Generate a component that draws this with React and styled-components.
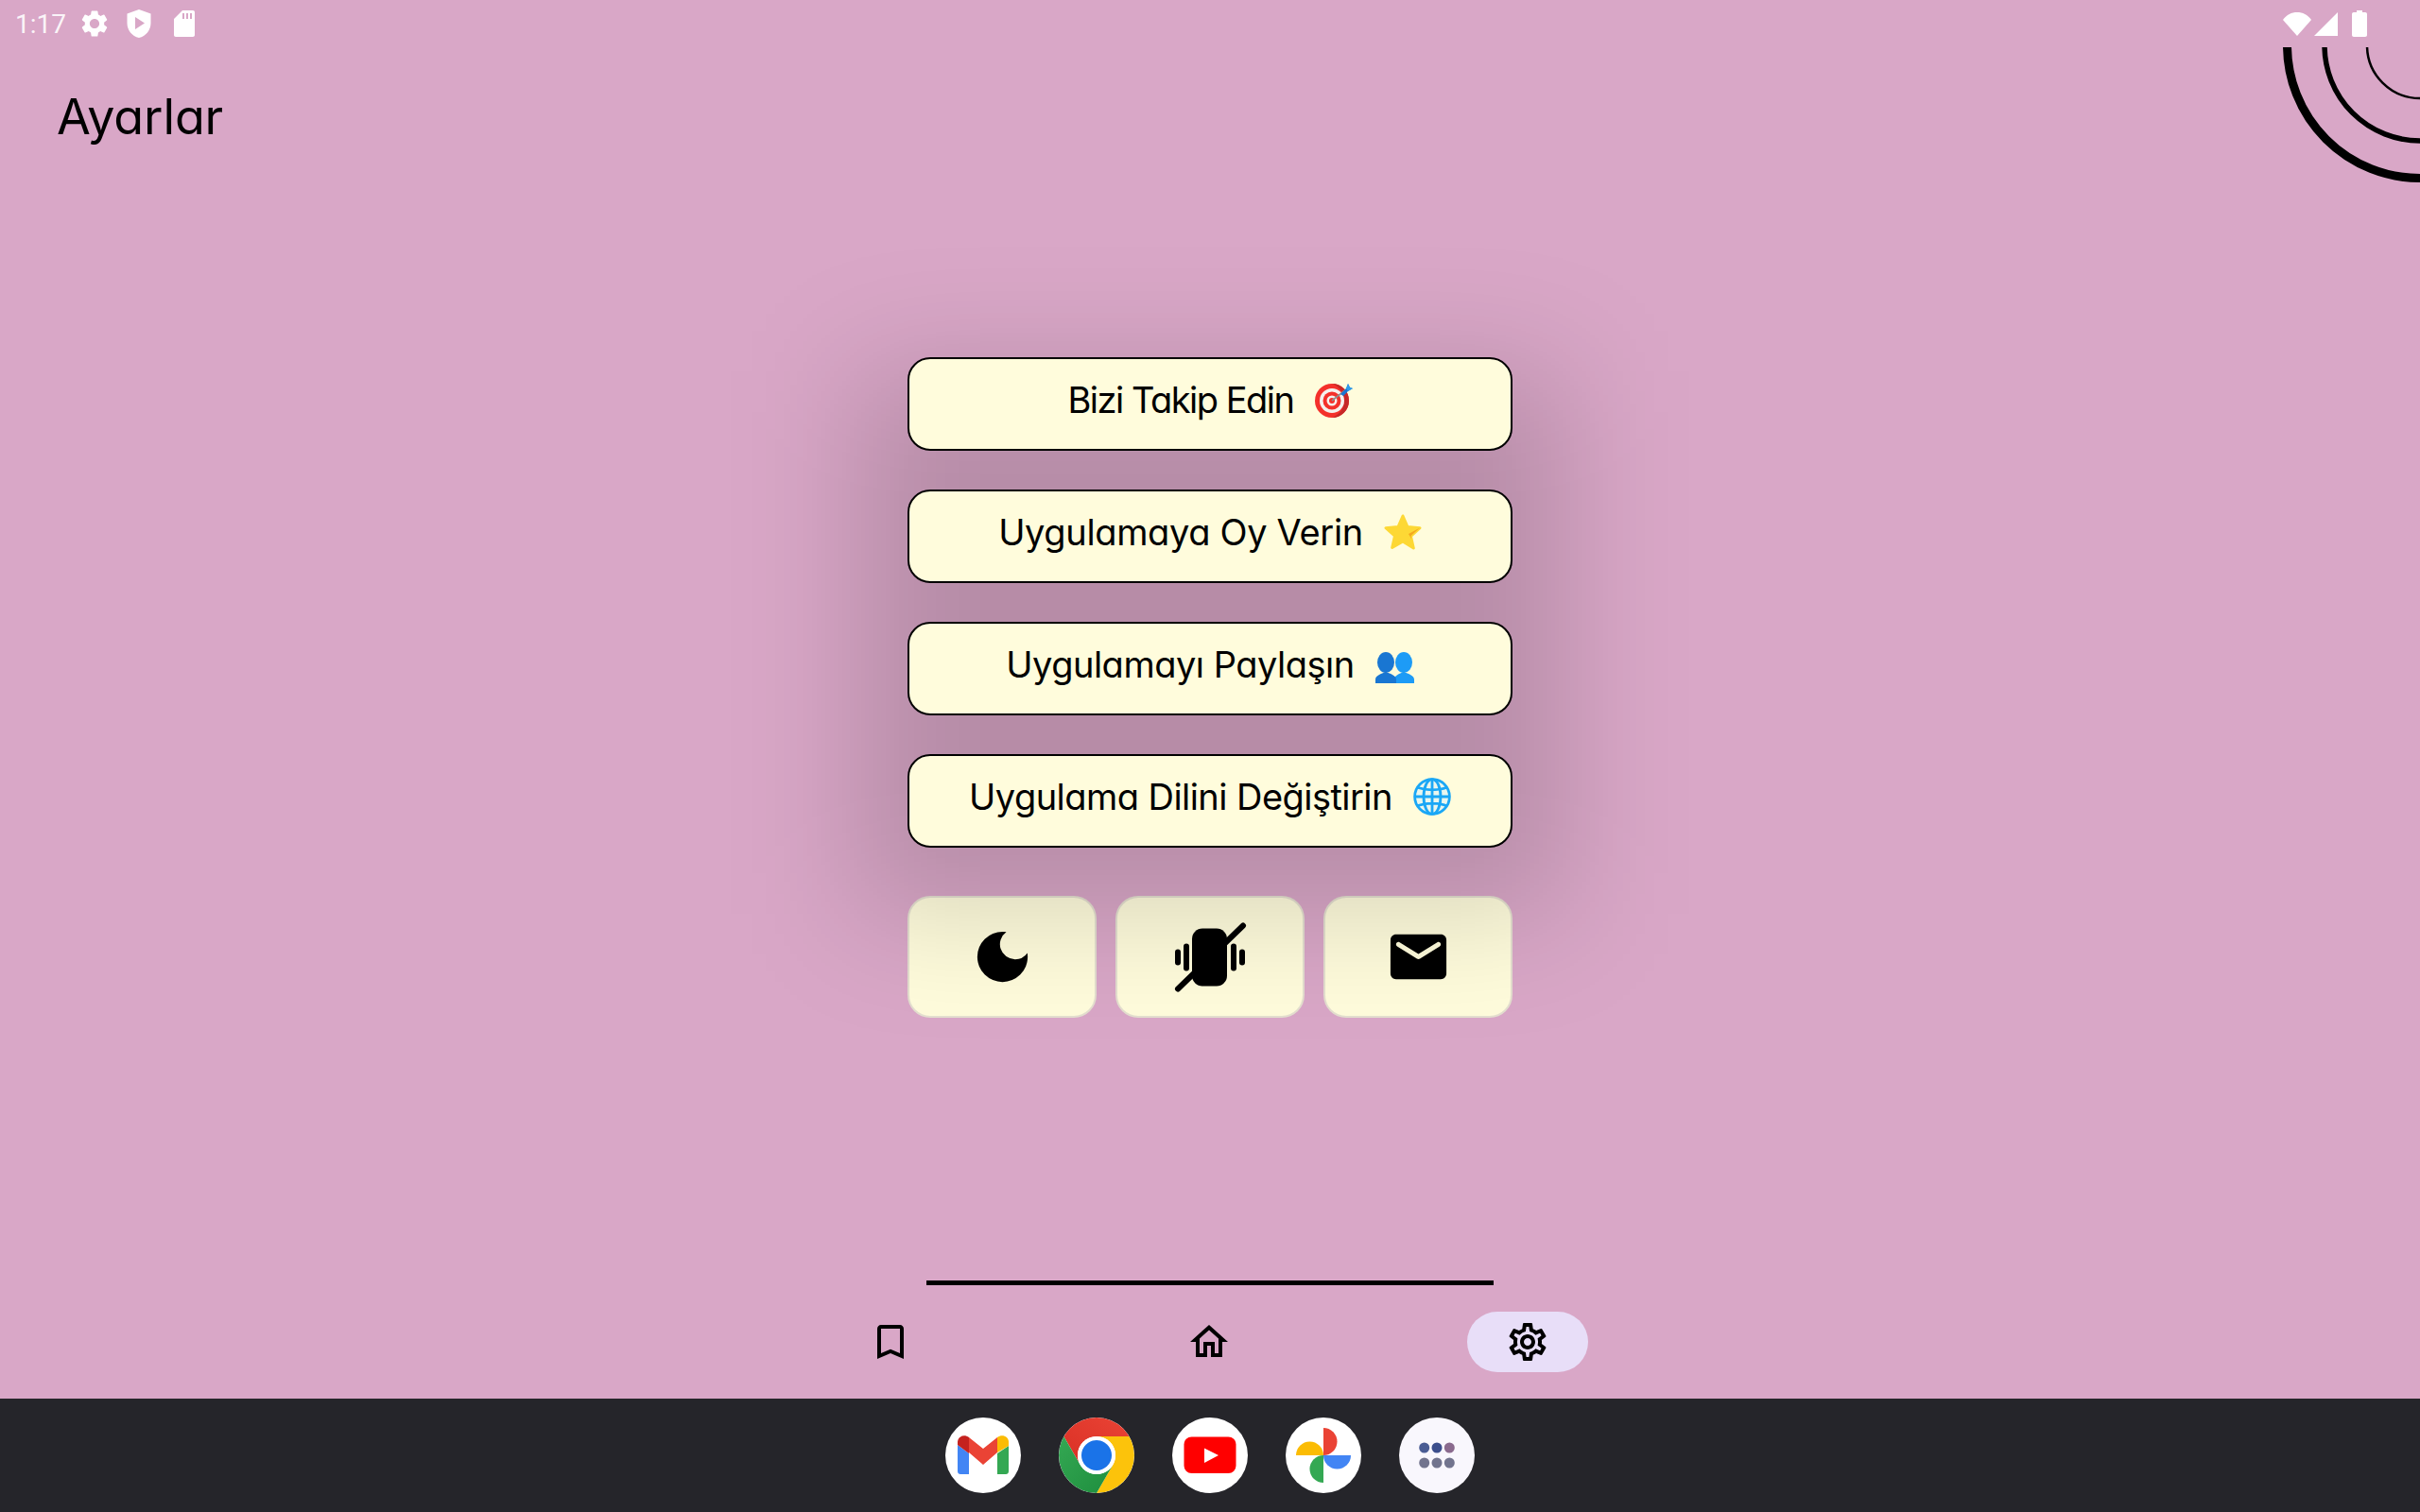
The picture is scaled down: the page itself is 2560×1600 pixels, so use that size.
import styled, { createGlobalStyle } from "styled-components";
import {
  MdBookmarkBorder,
  MdDarkMode,
  MdOutlineHome,
  MdOutlineSettings,
  MdSettings,
} from "react-icons/md";

const GlobalStyle = createGlobalStyle`
  * {
    box-sizing: border-box;
  }

  body {
    margin: 0;
    background: #d9a7c7;
    font-family: "Inter", "Noto Sans", sans-serif;
    font-feature-settings: "cv11" 1;
  }
`;

const Page = styled.div`
  position: relative;
  display: flex;
  flex-direction: column;
  height: 100vh;
  overflow: hidden;
  background: #d9a7c7;
  color: #000;
`;

const StatusBar = styled.div`
  display: flex;
  align-items: center;
  justify-content: space-between;
  height: 50px;
  padding: 0 56px 0 16px;
  color: #fff;
`;

const StatusGroup = styled.div`
  display: flex;
  align-items: center;
  gap: ${(p) => p.$gap || 12}px;
`;

const Time = styled.span`
  width: 55px;
  font-family: "Roboto", sans-serif;
  font-size: 28px;
  font-weight: 400;
  color: rgba(255, 255, 255, 0.9);
`;

const Rings = styled.svg`
  position: absolute;
  top: 50px;
  right: 0;
`;

const Header = styled.header`
  height: 328px;
  padding: 38px 0 0 60px;
`;

const Title = styled.h1`
  margin: 0;
  font-size: 52px;
  font-weight: 400;
  line-height: 72px;
  letter-spacing: -0.1px;
`;

const Main = styled.main`
  flex: 1;
  display: flex;
  flex-direction: column;
  align-items: center;
  gap: 51px;
`;

const MenuList = styled.div`
  position: relative;
  z-index: 1;
  display: flex;
  flex-direction: column;
  gap: 41px;
  width: 640px;

  &::before {
    content: "";
    position: absolute;
    inset: 15px -55px -70px;
    z-index: -1;
    background: rgba(0, 0, 0, 0.155);
    filter: blur(65px);
  }
`;

const MenuButton = styled.button`
  display: flex;
  align-items: center;
  justify-content: center;
  gap: 22px;
  width: 100%;
  height: 99px;
  padding: 0 0 10px;
  border: 2px solid #000;
  border-radius: 24px;
  background: #fffcdc;
  color: #000;
  font-family: inherit;
  font-feature-settings: inherit;
  font-size: 38px;
  font-weight: 400;
  letter-spacing: ${(p) => p.$tracking}px;
`;

const ActionRow = styled.div`
  display: flex;
  gap: 20px;
  width: 640px;
`;

const ActionButton = styled.button`
  display: flex;
  align-items: center;
  justify-content: center;
  flex: 1;
  height: 129px;
  padding: 0;
  border: 2px solid rgba(225, 220, 205, 0.9);
  border-radius: 24px;
  background: #fffcdc;
  color: #000;
`;

const BottomNav = styled.nav`
  display: flex;
  flex-direction: column;
  align-items: center;
  height: 125px;
`;

const NavLine = styled.div`
  width: 600px;
  height: 5px;
  background: #000;
`;

const NavItems = styled.div`
  display: grid;
  grid-template-columns: repeat(3, 337px);
  justify-items: center;
  margin: 28px 2px 0 0;
`;

const NavItem = styled.div`
  display: flex;
  align-items: center;
  justify-content: center;
  width: 128px;
  height: 64px;
  border-radius: 32px;
  background: ${(p) => (p.$active ? "#e8def8" : "transparent")};
`;

const Dock = styled.div`
  display: flex;
  justify-content: center;
  gap: 40px;
  height: 120px;
  padding-top: 20px;
  background: #25252a;
`;

const DockIcon = styled.div`
  width: 80px;
  height: 80px;
  border-radius: 50%;
  overflow: hidden;
  background: ${(p) => p.$bg || "#fff"};
`;

const TargetEmoji = () => (
  <svg width="40" height="38" viewBox="0 0 40 38">
    <circle cx="18" cy="20" r="18" fill="#f4302b" />
    <path d="M18 2a18 18 0 0 1 0 36c8-3 13-10 13-18S26 5 18 2z" fill="#c62828" />
    <circle cx="18" cy="20" r="13" fill="#f5f1ee" />
    <circle cx="18" cy="20" r="9.500" fill="#f4302b" />
    <circle cx="18" cy="20" r="5.500" fill="#f5f1ee" />
    <circle cx="18" cy="20" r="3" fill="#f4302b" />
    <path d="M18 20L32 9" stroke="#8d8d8d" strokeWidth="1.600" />
    <path d="M27 13l6-6 2-5 2 4 3 1-5 3-5 5z" fill="#1976d2" />
    <path d="M33 7l2-5 2 4 3 1-5 3z" fill="#2f9bea" />
  </svg>
);

const StarEmoji = () => (
  <svg width="40" height="38" viewBox="0 0 40 38">
    <path
      d="M20 2l5 11.500 13 1.200-9.500 8.800 2.800 12.500L20 29l-11.300 6.500 2.800-12.500L2 14.700l13-1.200z"
      fill="#fdd835"
      stroke="#fdd835"
      strokeWidth="3"
      strokeLinejoin="round"
    />
    <path d="M26 21l12-6.500-9.500 8.500 .8 3.500z" fill="#f4a91f" />
  </svg>
);

const PeopleEmoji = () => (
  <svg width="41" height="41" viewBox="0 -8 41 41">
    <ellipse cx="30" cy="11" rx="9" ry="11" fill="#1d9bf6" />
    <path d="M20 33v-4c0-4 5-6 10-8 5 2 11 4 11 8v4z" fill="#1d9bf6" />
    <ellipse cx="11" cy="11" rx="9" ry="11" fill="#1976d2" />
    <path d="M0 33v-4c0-4 6-6 11-8 5 2 11 4 11 8v4z" fill="#1976d2" />
  </svg>
);

const GlobeEmoji = () => (
  <svg width="40" height="40" viewBox="0 0 40 40" fill="none" stroke="#1aa7f6" strokeWidth="2.800">
    <circle cx="20" cy="20" r="18.400" fill="#e9f6ee" />
    <ellipse cx="20" cy="20" rx="9" ry="18.400" />
    <path d="M20 2v36M2 20h36M5 10.500c9 3 21 3 30 0M5 29.500c9-3 21-3 30 0" />
  </svg>
);

const VibrateOffIcon = () => (
  <svg width="80" height="80" viewBox="0 0 80 80">
    <rect x="21" y="9.500" width="37" height="61" rx="11" />
    <rect x="12" y="25.500" width="6" height="29" rx="3" />
    <rect x="3" y="31.500" width="6" height="17" rx="3" />
    <rect x="62" y="25.500" width="6" height="29" rx="3" />
    <rect x="71" y="31.500" width="6" height="17" rx="3" />
    <path d="M75 6.500L6 73.500" stroke="#000" strokeWidth="6" strokeLinecap="round" />
  </svg>
);

const MailIcon = () => (
  <svg width="71" height="71" viewBox="0 0 24 24">
    <path d="M20 4H4c-1.100 0-1.990.9-1.990 2L2 18c0 1.100.9 2 2 2h16c1.100 0 2-.9 2-2V6c0-1.100-.9-2-2-2zm-.4 4.250l-7.070 4.420c-.32.2-.74.2-1.060 0L4.400 8.250c-.25-.16-.4-.43-.4-.72 0-.67.73-1.070 1.300-.72L12 11l6.700-4.190c.57-.35 1.300.05 1.300.72 0 .29-.15.56-.4.72z" />
  </svg>
);

const ShieldIcon = () => (
  <svg width="36" height="36" viewBox="0 0 36 36" fill="#fff">
    <path
      fillRule="evenodd"
      d="M18 3l12.500 4.500v10c0 7.500-5.200 13.800-12.500 15.500C10.700 31.300 5.500 25 5.500 17.500v-10zM14 11v13l10-6.500z"
    />
  </svg>
);

const SdCardIcon = () => (
  <svg width="36" height="36" viewBox="0 0 36 36" fill="#fff">
    <path
      fillRule="evenodd"
      d="M16 4h11c1.200 0 2 .8 2 2v24c0 1.200-.8 2-2 2H9c-1.200 0-2-.8-2-2V13zM16 7v6h2V7zM20 7v6h2V7zM24 7v6h2V7z"
    />
  </svg>
);

const WifiIcon = () => (
  <svg width="30" height="26" viewBox="0 0 30 26" fill="#fff">
    <path d="M0 9C4 3.500 9 1 15 1s11 2.500 15 8L15 26z" />
  </svg>
);

const SignalIcon = () => (
  <svg width="26" height="26" viewBox="0 0 26 26" fill="#fff">
    <path d="M25 1v25H0z" />
  </svg>
);

const BatteryIcon = () => (
  <svg width="16" height="28" viewBox="0 0 16 28" fill="#fff">
    <path d="M5 0h6v2h3c1.200 0 2 .8 2 2v22c0 1.200-.8 2-2 2H2c-1.200 0-2-.8-2-2V4c0-1.200.8-2 2-2h3z" />
  </svg>
);

const GmailLogo = () => (
  <svg width="80" height="80" viewBox="0 0 80 80">
    <path d="M13 29l12 9v22h-9c-1.700 0-3-1.300-3-3z" fill="#4285f4" />
    <path d="M55 38l12-8v27c0 1.700-1.300 3-3 3h-9z" fill="#34a853" />
    <path d="M25 21l15 12 15-12v16L40 50 25 37z" fill="#ea4335" />
    <path d="M13 29v-3c0-6 7-9 12-5v17z" fill="#c5221f" />
    <path d="M55 37V21c5-4 12-1 12 5v4z" fill="#fbbc04" />
  </svg>
);

const ChromeLogo = () => (
  <svg width="80" height="80" viewBox="0 0 80 80">
    <defs>
      <linearGradient id="chromeRed" x1="0" y1="1" x2="1" y2="0">
        <stop offset="0" stopColor="#d93025" />
        <stop offset="1" stopColor="#ea4335" />
      </linearGradient>
      <linearGradient id="chromeGreen" x1="0" y1="0" x2="1" y2="1">
        <stop offset="0" stopColor="#34a853" />
        <stop offset="1" stopColor="#1e8e3e" />
      </linearGradient>
    </defs>
    <path d="M40 0a40 40 0 0 1 34.640 20H40a20 20 0 0 0-17.320 30L5.360 20A40 40 0 0 1 40 0z" fill="url(#chromeRed)" />
    <path d="M74.640 20A40 40 0 0 1 40 80l17.320-30A20 20 0 0 0 40 20z" fill="#fcc30b" />
    <path d="M5.360 20A40 40 0 0 0 40 80l17.320-30a20 20 0 0 1-34.640 0z" fill="url(#chromeGreen)" />
    <circle cx="40" cy="40" r="20" fill="#fff" />
    <circle cx="40" cy="40" r="16" fill="#1a73e8" />
  </svg>
);

const YoutubeLogo = () => (
  <svg width="80" height="80" viewBox="0 0 80 80">
    <rect x="12.500" y="20.500" width="55" height="38.500" rx="8" fill="#f00" />
    <path d="M34 32.500l15 7.500-15 8z" fill="#fff" />
  </svg>
);

const PhotosLogo = () => (
  <svg width="80" height="80" viewBox="0 0 80 80">
    <path d="M11 40a14.500 14.500 0 0 1 29 0z" fill="#fbbc04" />
    <path d="M40 11a14.500 14.500 0 0 1 0 29z" fill="#ea4335" />
    <path d="M40 40h29a14.500 14.500 0 0 1-29 0z" fill="#4285f4" />
    <path d="M40 40v29a14.500 14.500 0 0 1 0-29z" fill="#34a853" />
  </svg>
);

const AppsLogo = () => (
  <svg width="80" height="80" viewBox="0 0 80 80">
    <circle cx="26.700" cy="32" r="5.500" fill="#4a5c94" />
    <circle cx="40" cy="32" r="5.500" fill="#3c4e8c" />
    <circle cx="53.300" cy="32" r="5.500" fill="#8a6a8e" />
    <circle cx="26.700" cy="48" r="5.500" fill="#72748e" />
    <circle cx="40" cy="48" r="5.500" fill="#72748e" />
    <circle cx="53.300" cy="48" r="5.500" fill="#72748e" />
  </svg>
);

const menuItems = [
  { label: "Bizi Takip Edin", Emoji: TargetEmoji, tracking: -1.5 },
  { label: "Uygulamaya Oy Verin", Emoji: StarEmoji, tracking: -0.35 },
  { label: "Uygulamayı Paylaşın", Emoji: PeopleEmoji, tracking: -0.5 },
  { label: "Uygulama Dilini Değiştirin", Emoji: GlobeEmoji, tracking: -0.55 },
];

export default function App() {
  return (
    <Page>
      <GlobalStyle />
      <StatusBar>
        <StatusGroup>
          <Time>1:17</Time>
          <MdSettings size={34} />
          <ShieldIcon />
          <SdCardIcon />
        </StatusGroup>
        <StatusGroup $gap={14}>
          <StatusGroup $gap={3}>
            <WifiIcon />
            <SignalIcon />
          </StatusGroup>
          <BatteryIcon />
        </StatusGroup>
      </StatusBar>

      <Rings width="150" height="150" viewBox="0 0 150 150" fill="none" stroke="#000">
        <circle cx="150" cy="-2" r="140.500" strokeWidth="9" />
        <circle cx="150" cy="-2" r="101" strokeWidth="5.500" />
        <circle cx="150" cy="-2" r="56" strokeWidth="2.500" />
      </Rings>

      <Header>
        <Title>Ayarlar</Title>
      </Header>

      <Main>
        <MenuList>
          {menuItems.map(({ label, Emoji, tracking }) => (
            <MenuButton key={label} $tracking={tracking}>
              <span>{label}</span>
              <Emoji />
            </MenuButton>
          ))}
        </MenuList>
        <ActionRow>
          <ActionButton>
            <MdDarkMode size={71} />
          </ActionButton>
          <ActionButton>
            <VibrateOffIcon />
          </ActionButton>
          <ActionButton>
            <MailIcon />
          </ActionButton>
        </ActionRow>
      </Main>

      <BottomNav>
        <NavLine />
        <NavItems>
          <NavItem>
            <MdBookmarkBorder size={48} />
          </NavItem>
          <NavItem>
            <MdOutlineHome size={48} />
          </NavItem>
          <NavItem $active>
            <MdOutlineSettings size={48} />
          </NavItem>
        </NavItems>
      </BottomNav>

      <Dock>
        <DockIcon>
          <GmailLogo />
        </DockIcon>
        <DockIcon>
          <ChromeLogo />
        </DockIcon>
        <DockIcon>
          <YoutubeLogo />
        </DockIcon>
        <DockIcon>
          <PhotosLogo />
        </DockIcon>
        <DockIcon $bg="#f9f7fd">
          <AppsLogo />
        </DockIcon>
      </Dock>
    </Page>
  );
}
